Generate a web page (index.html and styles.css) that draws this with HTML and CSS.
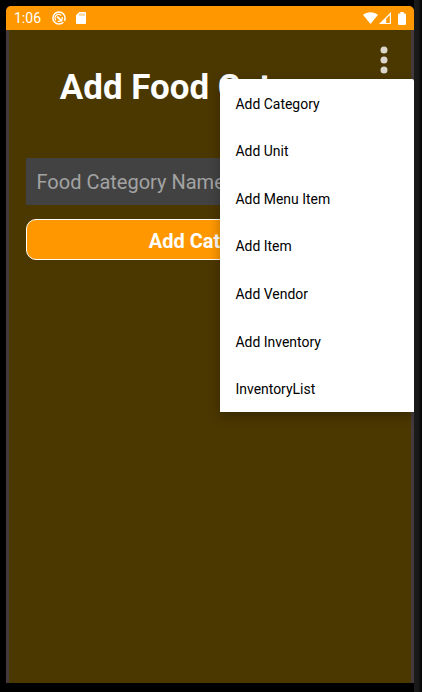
FILE: index.html
```
<!DOCTYPE html>
<html lang="en">
<head>
<meta charset="utf-8">
<title>Add Food Category</title>
<link rel="stylesheet" href="styles.css">
</head>
<body>
<div class="device">
  <div class="screen">
    <header class="status">
      <span class="clock">1:06</span>
      <svg class="sync" width="14" height="14" viewBox="0 0 14 14"><circle cx="7" cy="7" r="6.1" fill="none" stroke="#fff" stroke-width="1.5" stroke-dasharray="3 1.6 33.7"/><path d="M3.9 9.2A3.5 3.5 0 0 1 9.2 4.6M10.2 6A3.5 3.5 0 0 1 5.6 10.2" fill="none" stroke="#fff" stroke-width="1.3"/><path d="M5.2 5.6l4.8 4.6" stroke="#fff" stroke-width="1.8"/></svg>
      <svg class="card" width="10" height="12" viewBox="0 0 10 12"><path d="M3.3 0H9a1 1 0 0 1 1 1v10a1 1 0 0 1-1 1H1a1 1 0 0 1-1-1V3.3z" fill="#fff"/><path d="M4 1.5v2.3M6 1.5v2.3M8 1.5v2.3" stroke="#ff9800" stroke-width=".8"/></svg>
      <span class="spacer"></span>
      <svg class="wifi" width="15" height="12" viewBox="0 0 15 12"><path d="M0 2.7C4-.7 11-.7 15 2.7L7.5 12z" fill="#fff"/></svg>
      <svg class="signal" width="12" height="12" viewBox="0 0 12 12"><path d="M0 12L12 0v12z" fill="#fff"/><path d="M7.2 6.7V11H10.8V3z" fill="#ff9800"/></svg>
      <svg class="battery" width="8" height="13" viewBox="0 0 8 13"><path d="M2.3 0h3.4v1.5H7.3l.7.7v10.1l-.7.7H.7l-.7-.7V2.2l.7-.7h1.6z" fill="#fff"/></svg>
    </header>
    <main class="app">
      <h1 class="title">Add Food Category</h1>
      <div class="field">Food Category Name</div>
      <button class="submit">Add Category</button>
    </main>
    <svg class="more" width="8" height="28" viewBox="0 0 8 28"><g fill="#dbd5cb"><circle cx="4" cy="4" r="3.5"/><circle cx="4" cy="14" r="3.5"/><circle cx="4" cy="24" r="3.5"/></g></svg>
    <div class="shade"><ul class="menu">
      <li>Add Category</li>
      <li>Add Unit</li>
      <li>Add Menu Item</li>
      <li>Add Item</li>
      <li>Add Vendor</li>
      <li>Add Inventory</li>
      <li>InventoryList</li>
    </ul></div>
  </div>
</div>
</body>
</html>
```
FILE: styles.css
```
* { box-sizing: border-box; }
body {
  margin: 0;
  background: #000;
  font-family: Roboto, sans-serif;
}
.device {
  width: 422px;
  height: 692px;
  padding: 6px 8px 9px 6px;
  background: linear-gradient(to right, transparent 414px, #1b1b1b 414px, #171717 419px, #060606 421px);
  overflow: hidden;
}
.screen {
  position: relative;
  height: 677px;
  background: #443a3b;
  border-radius: 5px 5px 0 0;
}
.status {
  display: flex;
  align-items: center;
  height: 24px;
  padding: 0 8px;
  background: #ff9800;
  border-radius: 5px 5px 0 0;
  color: #fff;
}
.clock { font-size: 14px; line-height: 24px; width: 38px; }
.card { margin-left: 10px; }
.spacer { flex: 1; }
.signal { margin-left: 1px; }
.battery { margin-left: 7px; }
.app {
  height: 653px;
  margin: 0 3px;
  padding: 37px 17px 0;
  background: #4b3700;
  overflow: hidden;
}
.title {
  margin: 0;
  font-size: 34.9px;
  line-height: 42px;
  font-weight: 700;
  text-align: center;
  white-space: nowrap;
  color: #fff;
}
.field {
  height: 47px;
  margin-top: 49px;
  padding-left: 10.5px;
  background: #424242;
  color: #a3a3a3;
  font-size: 20px;
  line-height: 49px;
}
.submit {
  display: block;
  width: 100%;
  height: 41px;
  margin-top: 14px;
  padding: 2px 0 0;
  border: 1.5px solid #fff;
  border-radius: 10px;
  background: #ff9800;
  color: #fff;
  font: 700 20px Roboto, sans-serif;
}
.more { position: absolute; left: 374px; top: 39.5px; }
.shade {
  position: absolute;
  left: 194px;
  top: 53px;
  padding: 20px 0 30px 20px;
  overflow: hidden;
}
.menu {
  width: 194px;
  height: 333px;
  margin: 0;
  padding: 1.8px 0 0;
  list-style: none;
  background: #fff;
  border-radius: 2px 2px 0 0;
  box-shadow: 0 4px 12px rgba(0, 0, 0, .28);
  color: #000;
}
.menu li {
  height: 47.55px;
  padding-left: 15.5px;
  font-size: 13.95px;
  line-height: 47.2px;
}
```
